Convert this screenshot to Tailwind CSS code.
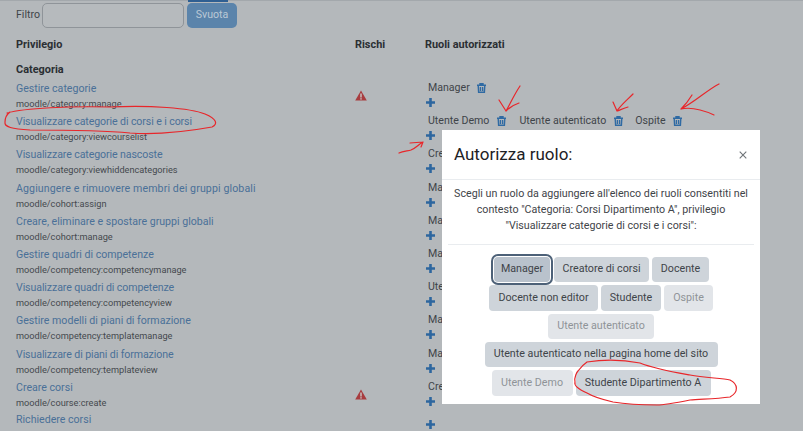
<!DOCTYPE html>
<html lang="it">
<head>
  <meta charset="UTF-8">
  <title>Autorizza ruolo</title>
  <script src="https://cdn.jsdelivr.net/npm/@tailwindcss/browser@4"></script>
</head>
<body class="relative w-[803px] h-[431px] overflow-hidden bg-[#b4b8bb] font-['Roboto',sans-serif] text-[10.6px] text-[#3f4449]">

  <!-- top edge -->
  <div class="h-px bg-[#a3a8ac] relative"><div class="absolute left-[188px] top-0 w-[40px] h-[2px] bg-[#2f5f92]"></div></div>

  <!-- filter -->
  <div class="flex items-center h-[26px] pl-[16px] mt-px">
    <span class="w-[26px]">Filtro</span>
    <div class="w-[142px] h-[25px] rounded-[5px] border border-[#8f9499] bg-[#b6babd]"></div>
    <div class="ml-[3px] w-[50px] h-[25px] rounded-[5px] bg-[#5b84ab] text-[#bcc9d6] flex items-center justify-center">Svuota</div>
  </div>

  <!-- table head -->
  <div class="flex pl-[16px] mt-[8px] h-[18px] items-center font-bold text-[10.9px] text-[#2b2f33]">
    <div class="w-[339px]">Privilegio</div>
    <div class="w-[70px]">Rischi</div>
    <div>Ruoli autorizzati</div>
  </div>
  <div class="pl-[16px] mt-[7px] h-[18px] flex items-center font-bold text-[10.9px] text-[#2b2f33]">Categoria</div>

  <!-- rows -->
  <div class="pl-[16px] mt-[2px]">
    <div class="flex h-[33.2px]">
      <div class="w-[339px]"><div class="text-[#4a7098] h-[16px] flex items-center">Gestire categorie</div><div class="text-[9.2px] text-[#45494e] h-[14px] flex items-center">moodle/category:manage</div></div>
      <div class="w-[73px] pt-[9px]"><svg width="12" height="11" viewBox="0 0 12 11"><path d="M6 0.5 L11.8 10.6 H0.2 Z" fill="#a83c3f"/><rect x="5.3" y="3.5" width="1.4" height="4" fill="#c9c9c9"/><rect x="5.3" y="8.2" width="1.4" height="1.4" fill="#c9c9c9"/></svg></div>
      <div class="-mt-[1px]">
        <div class="h-[16px] flex items-center">Manager<svg class="ml-[7px]" width="9" height="10" viewBox="0 0 9 10" fill="none" stroke="#2f6aa3" stroke-width="1.4"><path d="M0 2.3h9M3 2.2V.7h3v1.5M1.2 2.5l.4 6.8h5.8l.4-6.8M3.4 4v4M5.6 4v4"/></svg></div>
        <div class="h-[13px] -ml-[2px] flex items-center"><svg width="9" height="9" viewBox="0 0 9 9"><path d="M3.2 0h2.6v3.2H9v2.6H5.8V9H3.2V5.8H0V3.2h3.2z" fill="#2d669f"/></svg></div>
      </div>
    </div>

    <div class="flex h-[33.2px]">
      <div class="w-[339px]"><div class="text-[#4a7098] h-[16px] flex items-center tracking-[-0.1px]">Visualizzare categorie di corsi e i corsi</div><div class="text-[9.2px] text-[#45494e] h-[14px] flex items-center">moodle/category:viewcourselist</div></div>
      <div class="w-[73px]"></div>
      <div class="-mt-[1px]">
        <div class="h-[16px] flex items-center">
          <span>Utente Demo</span><svg class="ml-[8px]" width="9" height="10" viewBox="0 0 9 10" fill="none" stroke="#2f6aa3" stroke-width="1.4"><path d="M0 2.3h9M3 2.2V.7h3v1.5M1.2 2.5l.4 6.8h5.8l.4-6.8M3.4 4v4M5.6 4v4"/></svg>
          <span class="ml-[13px]">Utente autenticato</span><svg class="ml-[8px]" width="9" height="10" viewBox="0 0 9 10" fill="none" stroke="#2f6aa3" stroke-width="1.4"><path d="M0 2.3h9M3 2.2V.7h3v1.5M1.2 2.5l.4 6.8h5.8l.4-6.8M3.4 4v4M5.6 4v4"/></svg>
          <span class="ml-[12px]">Ospite</span><svg class="ml-[7px]" width="9" height="10" viewBox="0 0 9 10" fill="none" stroke="#2f6aa3" stroke-width="1.4"><path d="M0 2.3h9M3 2.2V.7h3v1.5M1.2 2.5l.4 6.8h5.8l.4-6.8M3.4 4v4M5.6 4v4"/></svg>
        </div>
        <div class="h-[13px] -ml-[2px] flex items-center"><svg width="9" height="9" viewBox="0 0 9 9"><path d="M3.2 0h2.6v3.2H9v2.6H5.8V9H3.2V5.8H0V3.2h3.2z" fill="#2d669f"/></svg></div>
      </div>
    </div>

    <div class="flex h-[33.2px]">
      <div class="w-[339px]"><div class="text-[#4a7098] h-[16px] flex items-center tracking-[-0.1px]">Visualizzare categorie nascoste</div><div class="text-[9.2px] text-[#45494e] h-[14px] flex items-center">moodle/category:viewhiddencategories</div></div>
      <div class="w-[73px]"></div>
      <div class="-mt-[1px]"><div class="h-[16px] w-[14px] overflow-hidden whitespace-nowrap leading-[16px]">Creatore di corsi</div><div class="h-[13px] -ml-[2px] flex items-center"><svg width="9" height="9" viewBox="0 0 9 9"><path d="M3.2 0h2.6v3.2H9v2.6H5.8V9H3.2V5.8H0V3.2h3.2z" fill="#2d669f"/></svg></div></div>
    </div>

    <div class="flex h-[33.2px]">
      <div class="w-[339px]"><div class="text-[#4a7098] h-[16px] flex items-center tracking-[0.12px]">Aggiungere e rimuovere membri dei gruppi globali</div><div class="text-[9.2px] text-[#45494e] h-[14px] flex items-center">moodle/cohort:assign</div></div>
      <div class="w-[73px]"></div>
      <div class="-mt-[1px]"><div class="h-[16px] w-[14px] overflow-hidden whitespace-nowrap leading-[16px]">Manager</div><div class="h-[13px] -ml-[2px] flex items-center"><svg width="9" height="9" viewBox="0 0 9 9"><path d="M3.2 0h2.6v3.2H9v2.6H5.8V9H3.2V5.8H0V3.2h3.2z" fill="#2d669f"/></svg></div></div>
    </div>

    <div class="flex h-[33.2px]">
      <div class="w-[339px]"><div class="text-[#4a7098] h-[16px] flex items-center">Creare, eliminare e spostare gruppi globali</div><div class="text-[9.2px] text-[#45494e] h-[14px] flex items-center">moodle/cohort:manage</div></div>
      <div class="w-[73px]"></div>
      <div class="-mt-[1px]"><div class="h-[16px] w-[14px] overflow-hidden whitespace-nowrap leading-[16px]">Manager</div><div class="h-[13px] -ml-[2px] flex items-center"><svg width="9" height="9" viewBox="0 0 9 9"><path d="M3.2 0h2.6v3.2H9v2.6H5.8V9H3.2V5.8H0V3.2h3.2z" fill="#2d669f"/></svg></div></div>
    </div>

    <div class="flex h-[33.2px]">
      <div class="w-[339px]"><div class="text-[#4a7098] h-[16px] flex items-center">Gestire quadri di competenze</div><div class="text-[9.2px] text-[#45494e] h-[14px] flex items-center">moodle/competency:competencymanage</div></div>
      <div class="w-[73px]"></div>
      <div class="-mt-[1px]"><div class="h-[16px] w-[14px] overflow-hidden whitespace-nowrap leading-[16px]">Manager</div><div class="h-[13px] -ml-[2px] flex items-center"><svg width="9" height="9" viewBox="0 0 9 9"><path d="M3.2 0h2.6v3.2H9v2.6H5.8V9H3.2V5.8H0V3.2h3.2z" fill="#2d669f"/></svg></div></div>
    </div>

    <div class="flex h-[33.2px]">
      <div class="w-[339px]"><div class="text-[#4a7098] h-[16px] flex items-center tracking-[-0.1px]">Visualizzare quadri di competenze</div><div class="text-[9.2px] text-[#45494e] h-[14px] flex items-center">moodle/competency:competencyview</div></div>
      <div class="w-[73px]"></div>
      <div class="-mt-[1px]"><div class="h-[16px] w-[14px] overflow-hidden whitespace-nowrap leading-[16px]">Utente</div><div class="h-[13px] -ml-[2px] flex items-center"><svg width="9" height="9" viewBox="0 0 9 9"><path d="M3.2 0h2.6v3.2H9v2.6H5.8V9H3.2V5.8H0V3.2h3.2z" fill="#2d669f"/></svg></div></div>
    </div>

    <div class="flex h-[33.2px]">
      <div class="w-[339px]"><div class="text-[#4a7098] h-[16px] flex items-center">Gestire modelli di piani di formazione</div><div class="text-[9.2px] text-[#45494e] h-[14px] flex items-center">moodle/competency:templatemanage</div></div>
      <div class="w-[73px]"></div>
      <div class="-mt-[1px]"><div class="h-[16px] w-[14px] overflow-hidden whitespace-nowrap leading-[16px]">Manager</div><div class="h-[13px] -ml-[2px] flex items-center"><svg width="9" height="9" viewBox="0 0 9 9"><path d="M3.2 0h2.6v3.2H9v2.6H5.8V9H3.2V5.8H0V3.2h3.2z" fill="#2d669f"/></svg></div></div>
    </div>

    <div class="flex h-[33.2px]">
      <div class="w-[339px]"><div class="text-[#4a7098] h-[16px] flex items-center tracking-[-0.1px]">Visualizzare di piani di formazione</div><div class="text-[9.2px] text-[#45494e] h-[14px] flex items-center">moodle/competency:templateview</div></div>
      <div class="w-[73px]"></div>
      <div class="-mt-[1px]"><div class="h-[16px] w-[14px] overflow-hidden whitespace-nowrap leading-[16px]">Manager</div><div class="h-[13px] -ml-[2px] flex items-center"><svg width="9" height="9" viewBox="0 0 9 9"><path d="M3.2 0h2.6v3.2H9v2.6H5.8V9H3.2V5.8H0V3.2h3.2z" fill="#2d669f"/></svg></div></div>
    </div>

    <div class="flex h-[33.2px]">
      <div class="w-[339px]"><div class="text-[#4a7098] h-[16px] flex items-center">Creare corsi</div><div class="text-[9.2px] text-[#45494e] h-[14px] flex items-center">moodle/course:create</div></div>
      <div class="w-[73px] pt-[9px]"><svg width="12" height="11" viewBox="0 0 12 11"><path d="M6 0.5 L11.8 10.6 H0.2 Z" fill="#a83c3f"/><rect x="5.3" y="3.5" width="1.4" height="4" fill="#c9c9c9"/><rect x="5.3" y="8.2" width="1.4" height="1.4" fill="#c9c9c9"/></svg></div>
      <div class="-mt-[1px]"><div class="h-[16px] w-[14px] overflow-hidden whitespace-nowrap leading-[16px]">Creatore di corsi</div><div class="h-[13px] -ml-[2px] flex items-center"><svg width="9" height="9" viewBox="0 0 9 9"><path d="M3.2 0h2.6v3.2H9v2.6H5.8V9H3.2V5.8H0V3.2h3.2z" fill="#2d669f"/></svg></div></div>
    </div>

    <div class="flex h-[33.2px]">
      <div class="w-[339px]"><div class="text-[#4a7098] h-[15px] flex items-center">Richiedere corsi</div></div>
      <div class="w-[73px]"></div>
      <div class="pt-[7px] -ml-[2px]"><svg width="9" height="9" viewBox="0 0 9 9"><path d="M3.2 0h2.6v3.2H9v2.6H5.8V9H3.2V5.8H0V3.2h3.2z" fill="#2d669f"/></svg></div>
    </div>
  </div>

  <!-- modal -->
  <div class="absolute left-[442px] top-[130px] w-[318px] h-[274px] bg-white text-[10.7px] text-[#3f4449]">
    <div class="h-[50px] pt-px border-b border-[#e9ecef] flex items-center justify-between pl-[12px] pr-[13px]">
      <span class="text-[17px] text-[#1d2125]">Autorizza ruolo:</span>
      <svg width="8" height="8" viewBox="0 0 8 8"><path d="M.7.7l6.6 6.6M7.3.7L.7 7.3" stroke="#6f7478" stroke-width="1.1"/></svg>
    </div>
    <div class="mx-[6px] h-[65px] border-b border-[#e9ecef] pt-[6px] text-center leading-[16px]">Scegli un ruolo da aggiungere all'elenco dei ruoli consentiti nel<br>contesto "Categoria: Corsi Dipartimento A", privilegio<br>"Visualizzare categorie di corsi e i corsi":</div>
    <div class="mt-[12px] flex flex-col items-center gap-[3px]">
      <div class="flex gap-[3px]">
        <div class="h-[25px] w-[56px] mx-[1px] rounded-[4px] bg-[#b9c2cc] ring-2 ring-[#4d6178] ring-offset-1 flex items-center justify-center">Manager</div>
        <div class="h-[25px] w-[95px] rounded-[4px] bg-[#ced4da] flex items-center justify-center">Creatore di corsi</div>
        <div class="h-[25px] w-[57px] rounded-[4px] bg-[#ced4da] flex items-center justify-center">Docente</div>
      </div>
      <div class="flex gap-[3px]">
        <div class="h-[26px] w-[109px] rounded-[4px] bg-[#ced4da] flex items-center justify-center">Docente non editor</div>
        <div class="h-[26px] w-[60px] rounded-[4px] bg-[#ced4da] flex items-center justify-center">Studente</div>
        <div class="h-[26px] w-[49px] rounded-[4px] bg-[#e2e5e9] text-[#8f9498] flex items-center justify-center">Ospite</div>
      </div>
      <div class="h-[25px] w-[106px] rounded-[4px] bg-[#e2e5e9] text-[#8f9498] flex items-center justify-center">Utente autenticato</div>
      <div class="h-[25px] w-[233px] rounded-[4px] bg-[#ced4da] flex items-center justify-center">Utente autenticato nella pagina home del sito</div>
      <div class="flex gap-[3px]">
        <div class="h-[26px] w-[81px] rounded-[4px] bg-[#e2e5e9] text-[#8f9498] flex items-center justify-center">Utente Demo</div>
        <div class="h-[26px] w-[135px] rounded-[4px] bg-[#ced4da] flex items-center justify-center">Studente Dipartimento A</div>
      </div>
    </div>
  </div>

  <!-- hand-drawn annotations -->
  <svg class="absolute inset-0 pointer-events-none" width="803" height="431" viewBox="0 0 803 431" fill="none" stroke="#e8262a" stroke-width="1.2" stroke-linecap="round" stroke-linejoin="round">
    <path d="M7 113 C25 108 70 106 110 107 C150 105 190 108 205 114 C217 119 218 124 212 127 C190 131 160 135 130 133 C100 130 60 130 30 130 C12 129 4 127 5 122 C5 118 6 115 10 112"/>
    <path d="M520 86 C514 95 510 104 506 111 M519 103 C513 105 509 108 506 111 M499 100 L506 111"/>
    <path d="M633 94 C626 101 620 106 617 111 M628 107 C624 108 620 110 617 111 M613 102 L617 111"/>
    <path d="M719 84 C707 90 695 102 681 109 M692 95 C689 100 685 105 681 109 M681 109 C690 107 703 110 714 115"/>
    <path d="M399 153 C403 151 408 151 411 150 C416 148 419 144 423 142 M410 143 L423 142 L421 147"/>
    <path d="M587 362 C605 359 625 360 640 363 C655 369 673 372 690 375 C705 378 722 378 730 380 C738 384 739 392 730 397 C715 399 700 399 690 400 C675 403 665 405 657 405 C640 405 625 404 613 402 C600 399 592 396 587 393 C578 389 574 385 575 382 C574 377 577 372 578 371 C581 367 584 364 587 362"/>
  </svg>
</body>
</html>
